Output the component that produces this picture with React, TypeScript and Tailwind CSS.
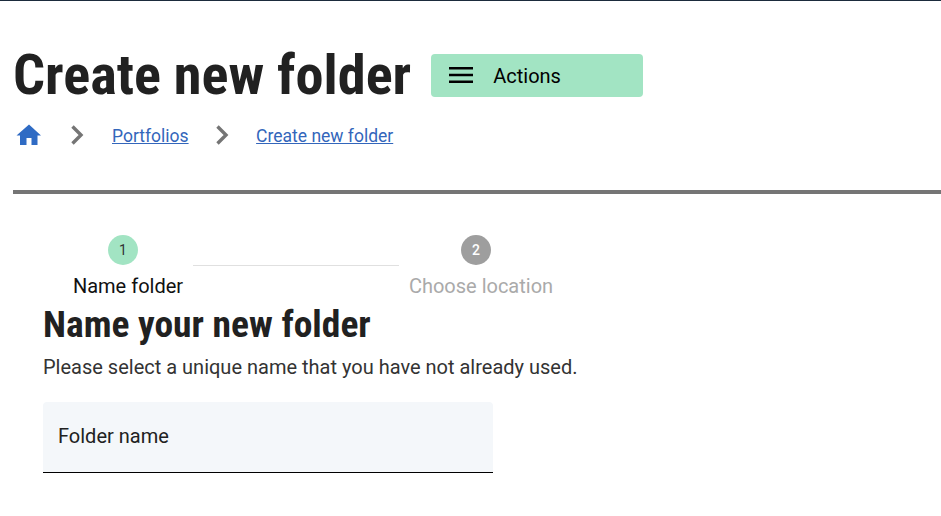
function Chevron() {
  return (
    <svg width="14" height="22" viewBox="0 0 14 22" className="shrink-0">
      <path d="M2.5 2.5 L11 11 L2.5 19.5" fill="none" stroke="#757575" strokeWidth="3.4" />
    </svg>
  );
}

function HomeIcon() {
  return (
    <svg width="26" height="24" viewBox="0 0 26 24" className="shrink-0">
      <path d="M10.5 22v-7h5v7h6V12.5h3.5L13 1.5 .5 12.5H4V22z" fill="#2f6bc4" />
    </svg>
  );
}

function MenuIcon() {
  return (
    <svg width="24" height="16" viewBox="0 0 24 16" className="shrink-0">
      <path d="M0 0h24v2.6H0zM0 6.7h24v2.6H0zM0 13.4h24V16H0z" fill="#000" />
    </svg>
  );
}

export default function App() {
  return (
    <div className="h-[516px] w-[941px] overflow-hidden bg-white font-['Roboto',sans-serif] text-[#212121]">
      <div className="h-px bg-[#1b2b3c]" />
      <div className="pl-[13px]">
        <div className="flex items-center pt-[40px]">
          <h1 className="m-0 text-[56.3px] leading-[68px] font-bold [font-stretch:75%]">Create new folder</h1>
          <button className="ml-[20px] flex h-[43px] w-[212px] items-center rounded-[4px] bg-[#a2e4c3] pl-[18px] text-[20px] text-black">
            <MenuIcon />
            <span className="ml-[20px] pt-px">Actions</span>
          </button>
        </div>
        <nav className="mt-[11px] flex h-[30px] items-center text-[17.5px] text-[#3366bb]">
          <span className="ml-[3px] flex"><HomeIcon /></span>
          <span className="ml-[28px] flex"><Chevron /></span>
          <a className="ml-[28px] pt-[2px] underline" href="#">Portfolios</a>
          <span className="ml-[26px] flex"><Chevron /></span>
          <a className="ml-[27.5px] pt-[2px] underline" href="#">Create new folder</a>
        </nav>
        <div className="mt-[40px] h-1 bg-[#757575]" />
      </div>
      <div className="pl-[43px]">
        <div className="flex items-start pt-[41px]">
          <div className="flex w-[150px] flex-col items-center pl-[20px]">
            <div className="mr-[10px] flex h-[30px] w-[30px] items-center justify-center rounded-full bg-[#a2e4c3] text-[14px] text-[#333]">1</div>
            <span className="mt-[9px] text-[20px] leading-[24px] text-[#111]">Name folder</span>
          </div>
          <div className="mt-[30px] mr-px h-px w-[206px] bg-[#e0e0e0]" />
          <div className="flex w-[162px] flex-col items-center">
            <div className="mr-[10px] flex h-[30px] w-[30px] items-center justify-center rounded-full bg-[#9e9e9e] text-[14px] font-medium text-white">2</div>
            <span className="mt-[9px] text-[20px] leading-[24px] text-[#aaaaaa]">Choose location</span>
          </div>
        </div>
        <h2 className="m-0 mt-[3px] text-[37.5px] leading-[46px] font-bold [font-stretch:75%]">Name your new folder</h2>
        <p className="m-0 mt-[7px] text-[20px] leading-[26px] text-[#333]">Please select a unique name that you have not already used.</p>
        <div className="mt-[22px] flex h-[71px] w-[450px] items-center rounded-t-[4px] border-b border-black bg-[#f4f7fa] pb-[2px] pl-[15px] text-[20px] text-[#212121]">
          Folder name
        </div>
      </div>
    </div>
  );
}
